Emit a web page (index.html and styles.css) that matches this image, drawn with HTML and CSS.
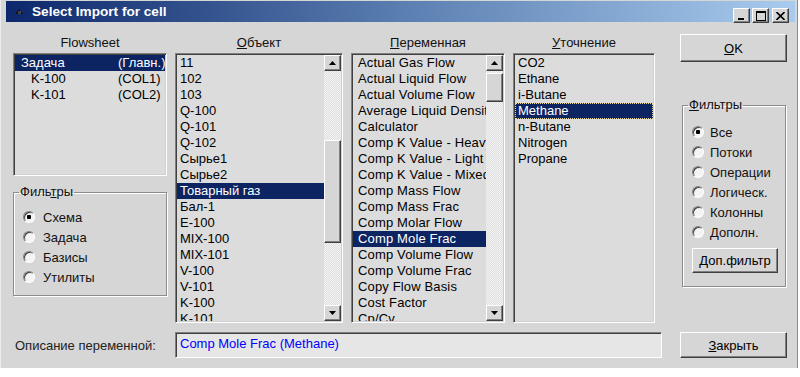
FILE: index.html
```html
<!DOCTYPE html>
<html lang="ru">
<head>
    <meta charset="UTF-8">
    <title>Select Import for cell</title>
    <link rel="stylesheet" href="styles.css">
</head>
<body>
    <div class="window">
        <div class="titlebar">
            <span class="app-icon">
                <svg width="9" height="7" viewBox="0 0 9 7"><polygon points="0,6 4,1 8,6" fill="#111"/><rect x="3" y="3" width="3" height="3" fill="#444"/></svg>
            </span>
            <span class="title">Select Import for cell</span>
            <div class="caption-buttons">
                <span class="cap-btn"><svg width="9" height="9" viewBox="0 0 9 9"><rect x="1" y="7" width="6" height="2" fill="#000"/></svg></span>
                <span class="cap-btn"><svg width="10" height="10" viewBox="0 0 10 10"><rect x="0.5" y="0.5" width="9" height="9" fill="none" stroke="#000"/><rect x="0" y="0" width="10" height="2" fill="#000"/></svg></span>
                <span class="cap-btn cap-close"><svg width="9" height="8" viewBox="0 0 9 8"><path d="M0.5 0 L8.5 8 M8.5 0 L0.5 8" stroke="#000" stroke-width="1.6"/></svg></span>
            </div>
        </div>

        <div class="client">
            <div class="columns">
                <!-- Flowsheet column -->
                <div class="col">
                    <div class="col-label">Flowsheet</div>
                    <div class="listbox flowsheet-list">
                        <div class="items">
                            <div class="fs-item selected"><span>Задача</span><span>(Главн.)</span></div>
                            <div class="fs-item sub"><span>K-100</span><span>(COL1)</span></div>
                            <div class="fs-item sub"><span>K-101</span><span>(COL2)</span></div>
                        </div>
                    </div>
                    <fieldset class="group group-left">
                        <legend>Филь<u>т</u>ры</legend>
                        <div class="radio-row"><span class="radio checked"></span>Схема</div>
                        <div class="radio-row"><span class="radio"></span>Задача</div>
                        <div class="radio-row"><span class="radio"></span>Базисы</div>
                        <div class="radio-row"><span class="radio"></span>Утилиты</div>
                    </fieldset>
                </div>

                <!-- Object column -->
                <div class="col">
                    <div class="col-label"><u>О</u>бъект</div>
                    <div class="listbox tall">
                        <div class="items">
                            <div class="item">11</div>
                            <div class="item">102</div>
                            <div class="item">103</div>
                            <div class="item">Q-100</div>
                            <div class="item">Q-101</div>
                            <div class="item">Q-102</div>
                            <div class="item">Сырье1</div>
                            <div class="item">Сырье2</div>
                            <div class="item selected">Товарный газ</div>
                            <div class="item">Бал-1</div>
                            <div class="item">E-100</div>
                            <div class="item">MIX-100</div>
                            <div class="item">MIX-101</div>
                            <div class="item">V-100</div>
                            <div class="item">V-101</div>
                            <div class="item">K-100</div>
                            <div class="item">K-101</div>
                        </div>
                        <div class="vscroll">
                            <span class="sb-btn"><svg width="7" height="4" viewBox="0 0 7 4"><polygon points="0,4 3.5,0 7,4" fill="#000"/></svg></span>
                            <div class="sb-track">
                                <div class="sb-space object-space"></div>
                                <div class="sb-thumb object-thumb"></div>
                            </div>
                            <span class="sb-btn"><svg width="7" height="4" viewBox="0 0 7 4"><polygon points="0,0 7,0 3.5,4" fill="#000"/></svg></span>
                        </div>
                    </div>
                </div>

                <!-- Variable column -->
                <div class="col">
                    <div class="col-label"><u>П</u>еременная</div>
                    <div class="listbox tall">
                        <div class="items wide-text">
                            <div class="item">Actual Gas Flow</div>
                            <div class="item">Actual Liquid Flow</div>
                            <div class="item">Actual Volume Flow</div>
                            <div class="item">Average Liquid Density</div>
                            <div class="item">Calculator</div>
                            <div class="item">Comp K Value - Heavy</div>
                            <div class="item">Comp K Value - Light</div>
                            <div class="item">Comp K Value - Mixed</div>
                            <div class="item">Comp Mass Flow</div>
                            <div class="item">Comp Mass Frac</div>
                            <div class="item">Comp Molar Flow</div>
                            <div class="item selected">Comp Mole Frac</div>
                            <div class="item">Comp Volume Flow</div>
                            <div class="item">Comp Volume Frac</div>
                            <div class="item">Copy Flow Basis</div>
                            <div class="item">Cost Factor</div>
                            <div class="item">Cp/Cv</div>
                        </div>
                        <div class="vscroll">
                            <span class="sb-btn"><svg width="7" height="4" viewBox="0 0 7 4"><polygon points="0,4 3.5,0 7,4" fill="#000"/></svg></span>
                            <div class="sb-track">
                                <div class="sb-space variable-space"></div>
                                <div class="sb-thumb variable-thumb"></div>
                            </div>
                            <span class="sb-btn"><svg width="7" height="4" viewBox="0 0 7 4"><polygon points="0,0 7,0 3.5,4" fill="#000"/></svg></span>
                        </div>
                    </div>
                </div>

                <!-- Qualifier column -->
                <div class="col">
                    <div class="col-label"><u>У</u>точнение</div>
                    <div class="listbox tall">
                        <div class="items">
                            <div class="item">CO2</div>
                            <div class="item">Ethane</div>
                            <div class="item">i-Butane</div>
                            <div class="item selected focused">Methane</div>
                            <div class="item">n-Butane</div>
                            <div class="item">Nitrogen</div>
                            <div class="item">Propane</div>
                        </div>
                    </div>
                </div>

                <!-- Buttons column -->
                <div class="col col-buttons">
                    <button class="btn btn-ok"><u>O</u>K</button>
                    <fieldset class="group group-right">
                        <legend><u>Ф</u>ильтры</legend>
                        <div class="radio-row"><span class="radio checked"></span>Все</div>
                        <div class="radio-row"><span class="radio"></span>Потоки</div>
                        <div class="radio-row"><span class="radio"></span>Операции</div>
                        <div class="radio-row"><span class="radio"></span>Логическ.</div>
                        <div class="radio-row"><span class="radio"></span>Колонны</div>
                        <div class="radio-row"><span class="radio"></span>Дополн.</div>
                        <button class="btn btn-extra">Доп.фильтр</button>
                    </fieldset>
                </div>
            </div>

            <div class="desc-row">
                <div class="desc-label">Описание переменной:</div>
                <div class="desc-field">Comp Mole Frac (Methane)</div>
                <button class="btn btn-close"><u>З</u>акрыть</button>
            </div>
        </div>
    </div>
</body>
</html>
```

FILE: styles.css
```css
body {
    margin: 0;
    background-color: #ffffff;
    font-family: 'Liberation Sans', Arial, sans-serif;
    font-size: 13px;
    color: #000000;
}
.window {
    width: 798px;
    height: 368px;
    box-sizing: border-box;
    background-color: #d6d6d6;
    border-left: 1px solid #ececec;
    border-right: 1px solid #8a8a8a;
    padding: 1px 2px 0 5px;
}
.titlebar {
    height: 21px;
    display: flex;
    align-items: center;
    background: linear-gradient(to right, #0c276b, #5a7eb0 50%, #a8cbee);
    color: #ffffff;
}
.app-icon {
    width: 26px;
    display: flex;
    justify-content: center;
}
.title {
    font-weight: bold;
    font-size: 13.6px;
}
.caption-buttons {
    margin-left: auto;
    margin-right: 6px;
    display: flex;
    gap: 2px;
    align-self: flex-end;
    margin-bottom: -1px;
}
.cap-btn {
    width: 17px;
    height: 15px;
    box-sizing: border-box;
    background-color: #d6d6d6;
    border: 1px solid;
    border-color: #ffffff #404040 #404040 #ffffff;
    box-shadow: inset -1px -1px #808080;
    display: flex;
    align-items: center;
    justify-content: center;
}
.cap-close {
    margin-left: 1px;
}
.client {
    padding: 12px 0 0 7px;
}
.columns {
    display: grid;
    grid-template-columns: 154px 168px 154px 142px 124px;
    column-gap: 8px;
    height: 289px;
}
.col {
    display: flex;
    flex-direction: column;
    min-width: 0;
}
.col-label {
    margin-top: 1px;
    height: 16px;
    line-height: 16px;
    text-align: center;
    color: #111;
}
.listbox {
    margin-top: 2px;
    display: flex;
    box-sizing: border-box;
    background-color: #dcdcdc;
    border: 1px solid;
    border-color: #808080 #ffffff #ffffff #808080;
    box-shadow: inset 1px 1px #404040, inset -1px -1px #d0d0d0;
    padding: 1px;
    overflow: hidden;
}
.flowsheet-list {
    height: 123px;
}
.tall {
    height: 270px;
}
.items {
    flex: 1;
    min-width: 0;
    overflow: hidden;
}
.item {
    height: 16px;
    line-height: 16px;
    padding-left: 3px;
    white-space: nowrap;
    overflow: hidden;
}
.wide-text .item {
    padding-left: 5px;
    letter-spacing: 0.15px;
}
.fs-item {
    height: 16px;
    line-height: 16px;
    display: grid;
    grid-template-columns: 97px auto;
    padding-left: 6px;
    white-space: nowrap;
    overflow: hidden;
}
.fs-item.sub {
    padding-left: 16px;
    grid-template-columns: 87px auto;
}
.selected {
    background-color: #0c2462;
    color: #ffffff;
}
.focused {
    outline: 1px dotted #e8d890;
    outline-offset: -1px;
}
.vscroll {
    width: 17px;
    display: flex;
    flex-direction: column;
}
.sb-btn {
    height: 16px;
    box-sizing: border-box;
    background-color: #d6d6d6;
    border: 1px solid;
    border-color: #ffffff #404040 #404040 #ffffff;
    box-shadow: inset -1px -1px #808080;
    display: flex;
    align-items: center;
    justify-content: center;
}
.sb-track {
    flex: 1;
    display: flex;
    flex-direction: column;
    background: repeating-conic-gradient(#f4f4f4 0 25%, #dedede 0 50%) 0 0 / 2px 2px;
}
.sb-thumb {
    box-sizing: border-box;
    background-color: #d6d6d6;
    border: 1px solid;
    border-color: #ffffff #404040 #404040 #ffffff;
    box-shadow: inset -1px -1px #808080;
}
.object-space {
    height: 69px;
}
.object-thumb {
    height: 103px;
}
.variable-space {
    height: 2px;
}
.variable-thumb {
    height: 29px;
}
.group {
    margin: 0;
    box-sizing: border-box;
    border: 1px solid #8c8c8c;
    box-shadow: inset 1px 1px #ffffff, 1px 1px #ffffff;
    padding: 0 0 0 9px;
}
.group legend {
    margin-left: -4px;
    padding: 0 1px;
    height: 16px;
    line-height: 16px;
    color: #111;
}
.group-left {
    margin-top: 8px;
    height: 112px;
    padding-top: 7px;
}
.radio-row {
    height: 20px;
    display: flex;
    align-items: center;
    gap: 8px;
    color: #111;
}
.group-right .radio-row {
    gap: 6px;
}
.radio {
    width: 12px;
    height: 12px;
    box-sizing: border-box;
    border-radius: 50%;
    border: 1px solid;
    border-color: #808080 #ffffff #ffffff #808080;
    box-shadow: inset 1px 1px #404040;
    background: #f4f4f4;
}
.radio.checked {
    background: radial-gradient(circle, #000000 0 2px, #f4f4f4 2.5px);
}
.btn {
    font-family: 'Liberation Sans', Arial, sans-serif;
    font-size: 13px;
    color: #000;
    background-color: #d6d6d6;
    box-sizing: border-box;
    border: 1px solid;
    border-color: #ffffff #404040 #404040 #ffffff;
    box-shadow: inset -1px -1px #808080;
    padding: 0;
}
.col-buttons {
    padding-left: 17px;
}
.btn-ok {
    height: 28px;
}
.group-right {
    margin: 35px 1px 0 2px;
    height: 190px;
    padding-top: 9px;
}
.btn-extra {
    margin-top: 6px;
    width: 86px;
    height: 25px;
}
.desc-row {
    margin-top: 9px;
    display: flex;
    align-items: center;
}
.desc-label {
    width: 162px;
    padding-left: 2px;
    box-sizing: border-box;
    color: #222;
}
.desc-field {
    width: 487px;
    height: 26px;
    box-sizing: border-box;
    line-height: 22px;
    padding-left: 4px;
    color: #0000ff;
    background-color: #e6e6e6;
    border: 1px solid;
    border-color: #808080 #ffffff #ffffff #808080;
    box-shadow: inset 1px 1px #404040;
}
.btn-close {
    margin-left: 18px;
    width: 107px;
    height: 26px;
}
```
